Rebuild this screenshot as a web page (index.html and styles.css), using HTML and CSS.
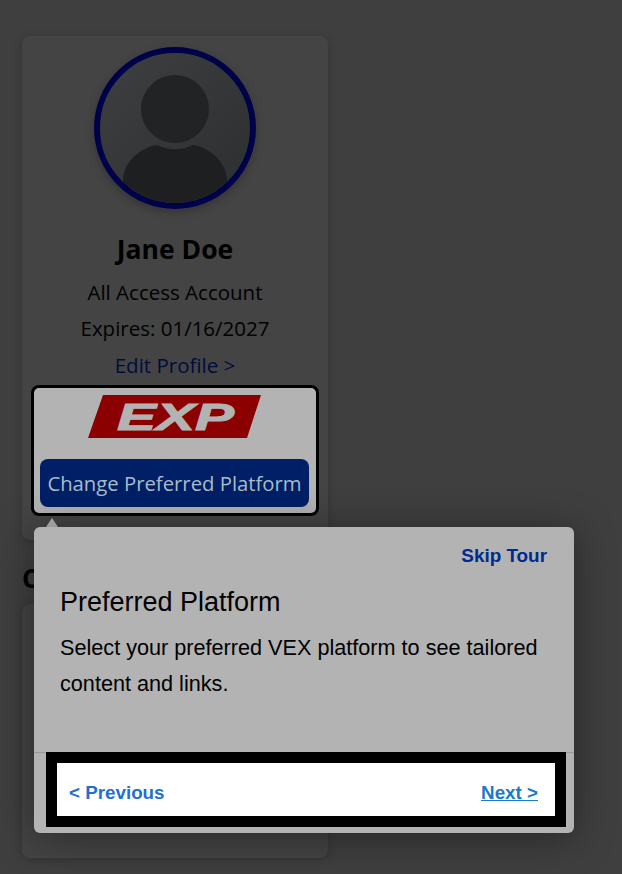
FILE: index.html
```html
<!DOCTYPE html>
<html>
<head>
    <title>My Account</title>
    <link rel="stylesheet" href="styles.css">
</head>
<body>
<div class="page">
    <div class="card profile-card">
        <div class="avatar">
            <svg viewBox="0 0 150 150" width="150" height="150">
                <circle cx="75" cy="56" r="34" fill="#222324"/>
                <path d="M23 150 V128 C23 108 42 94 57 92 A40 40 0 0 0 93 92 C108 94 127 108 127 128 V150 Z" fill="#1e1f20"/>
            </svg>
        </div>
        <h2 class="name">Jane Doe</h2>
        <p class="info first-info">All Access Account</p>
        <p class="info">Expires: 01/16/2027</p>
        <a href="#" class="edit-link">Edit Profile &gt;</a>
        <div class="platform-box">
            <svg class="logo" viewBox="0 0 173 43" width="173" height="43">
                <polygon points="15,0 173,0 159,43 0,43" fill="#8b0000"/>
                <text x="29" y="35" textLength="117" lengthAdjust="spacingAndGlyphs" class="logo-text">EXP</text>
            </svg>
            <a href="#" class="platform-button">Change Preferred Platform</a>
        </div>
    </div>
    <h3 class="section-title">C</h3>
    <div class="card second-card"></div>
</div>

<div class="tour-arrow"></div>
<div class="tour-box">
    <div class="tour-top">
        <a href="#" class="skip-link">Skip Tour</a>
    </div>
    <h3 class="tour-title">Preferred Platform</h3>
    <p class="tour-text">Select your preferred VEX platform to see tailored content and links.</p>
    <div class="tour-footer">
        <div class="tour-nav">
            <a href="#" class="prev-link">&lt; Previous</a>
            <a href="#" class="next-link">Next &gt;</a>
        </div>
    </div>
</div>
</body>
</html>
```

FILE: styles.css
```css
html, body {
    margin: 0;
    height: 874px;
    overflow: hidden;
    background-color: #3f3f3f;
}

.page {
    padding: 36px 22px 0;
    font-family: "Open Sans", sans-serif;
}

.card {
    width: 306px;
    box-sizing: border-box;
    background-color: #444;
    border-radius: 8px;
    box-shadow: 0 2px 10px rgba(0, 0, 0, 0.2);
}

.profile-card {
    height: 504px;
    padding-top: 11px;
    display: flex;
    flex-direction: column;
    align-items: center;
}

.avatar {
    width: 150px;
    height: 150px;
    border: 6px solid #00004a;
    border-radius: 50%;
    overflow: hidden;
    background: linear-gradient(135deg, #3d3f41, #2d2e30);
    box-shadow: 0 3px 8px rgba(0, 0, 0, 0.25);
}

.avatar svg {
    display: block;
}

.name {
    margin: 24px 0 0;
    font-size: 26.5px;
    line-height: 32px;
    font-weight: bold;
    color: #000;
}

.info {
    margin: 10px 0 0;
    font-size: 20.5px;
    line-height: 26px;
    color: #000;
}

.first-info {
    margin-top: 14px;
}

.edit-link {
    margin-top: 11px;
    font-size: 20.5px;
    line-height: 26px;
    color: #000c3c;
    text-decoration: none;
}

.platform-box {
    width: 288px;
    height: 131px;
    margin-top: 7px;
    box-sizing: border-box;
    border: 3px solid #000;
    border-radius: 8px;
    background-color: #b3b3b3;
    padding: 7px 7px 6px 6px;
    display: flex;
    flex-direction: column;
    align-items: center;
}

.logo {
    display: block;
    flex-shrink: 0;
    overflow: visible;
}

.logo-text {
    font-family: "Liberation Sans", sans-serif;
    font-size: 37px;
    font-weight: bold;
    font-style: italic;
    fill: #b3b3b3;
    stroke: #b3b3b3;
    stroke-width: 1px;
}

.platform-button {
    width: 100%;
    height: 48px;
    margin-top: 21px;
    border-radius: 8px;
    background-color: #001f66;
    color: #a9bcc6;
    font-size: 20.3px;
    line-height: 48px;
    text-align: center;
    text-decoration: none;
}

.section-title {
    margin: 24px 0 12px;
    font-size: 26px;
    line-height: 28px;
    font-weight: bold;
    color: #000;
}

.second-card {
    height: 254px;
}

/* Tour popup sits over the page */
.tour-arrow {
    position: absolute;
    left: 46px;
    top: 518px;
    border-left: 6.5px solid transparent;
    border-right: 6.5px solid transparent;
    border-bottom: 9px solid #b3b3b3;
}

.tour-box {
    position: absolute;
    left: 34px;
    top: 527px;
    width: 540px;
    height: 306px;
    box-sizing: border-box;
    background-color: #b3b3b3;
    border-radius: 6px;
    box-shadow: 0 4px 40px rgba(0, 0, 0, 0.4);
    font-family: "Liberation Sans", sans-serif;
    display: flex;
    flex-direction: column;
}

.tour-top {
    padding: 18px 27px 0;
    text-align: right;
    line-height: 21px;
}

.skip-link {
    font-size: 18.9px;
    font-weight: bold;
    color: #002a8f;
    text-decoration: none;
}

.tour-title {
    margin: 19px 26px 0;
    font-size: 27px;
    line-height: 32px;
    font-weight: normal;
    color: #000;
}

.tour-text {
    margin: 12px 26px 0;
    font-size: 21.65px;
    line-height: 36px;
    color: #000;
}

.tour-footer {
    margin-top: auto;
    height: 81px;
    box-sizing: border-box;
    border-top: 1px solid #999;
    padding: 0 8px 6px 12px;
    display: flex;
}

.tour-nav {
    flex: 1;
    margin-top: -1px;
    border: 11px solid #000;
    background-color: #fff;
    padding: 7px 17px 0 12px;
    display: flex;
    justify-content: space-between;
    align-items: center;
    font-size: 18.8px;
    font-weight: bold;
}

.prev-link {
    color: #1f6fd6;
    text-decoration: none;
}

.next-link {
    color: #1a7acb;
}
```
